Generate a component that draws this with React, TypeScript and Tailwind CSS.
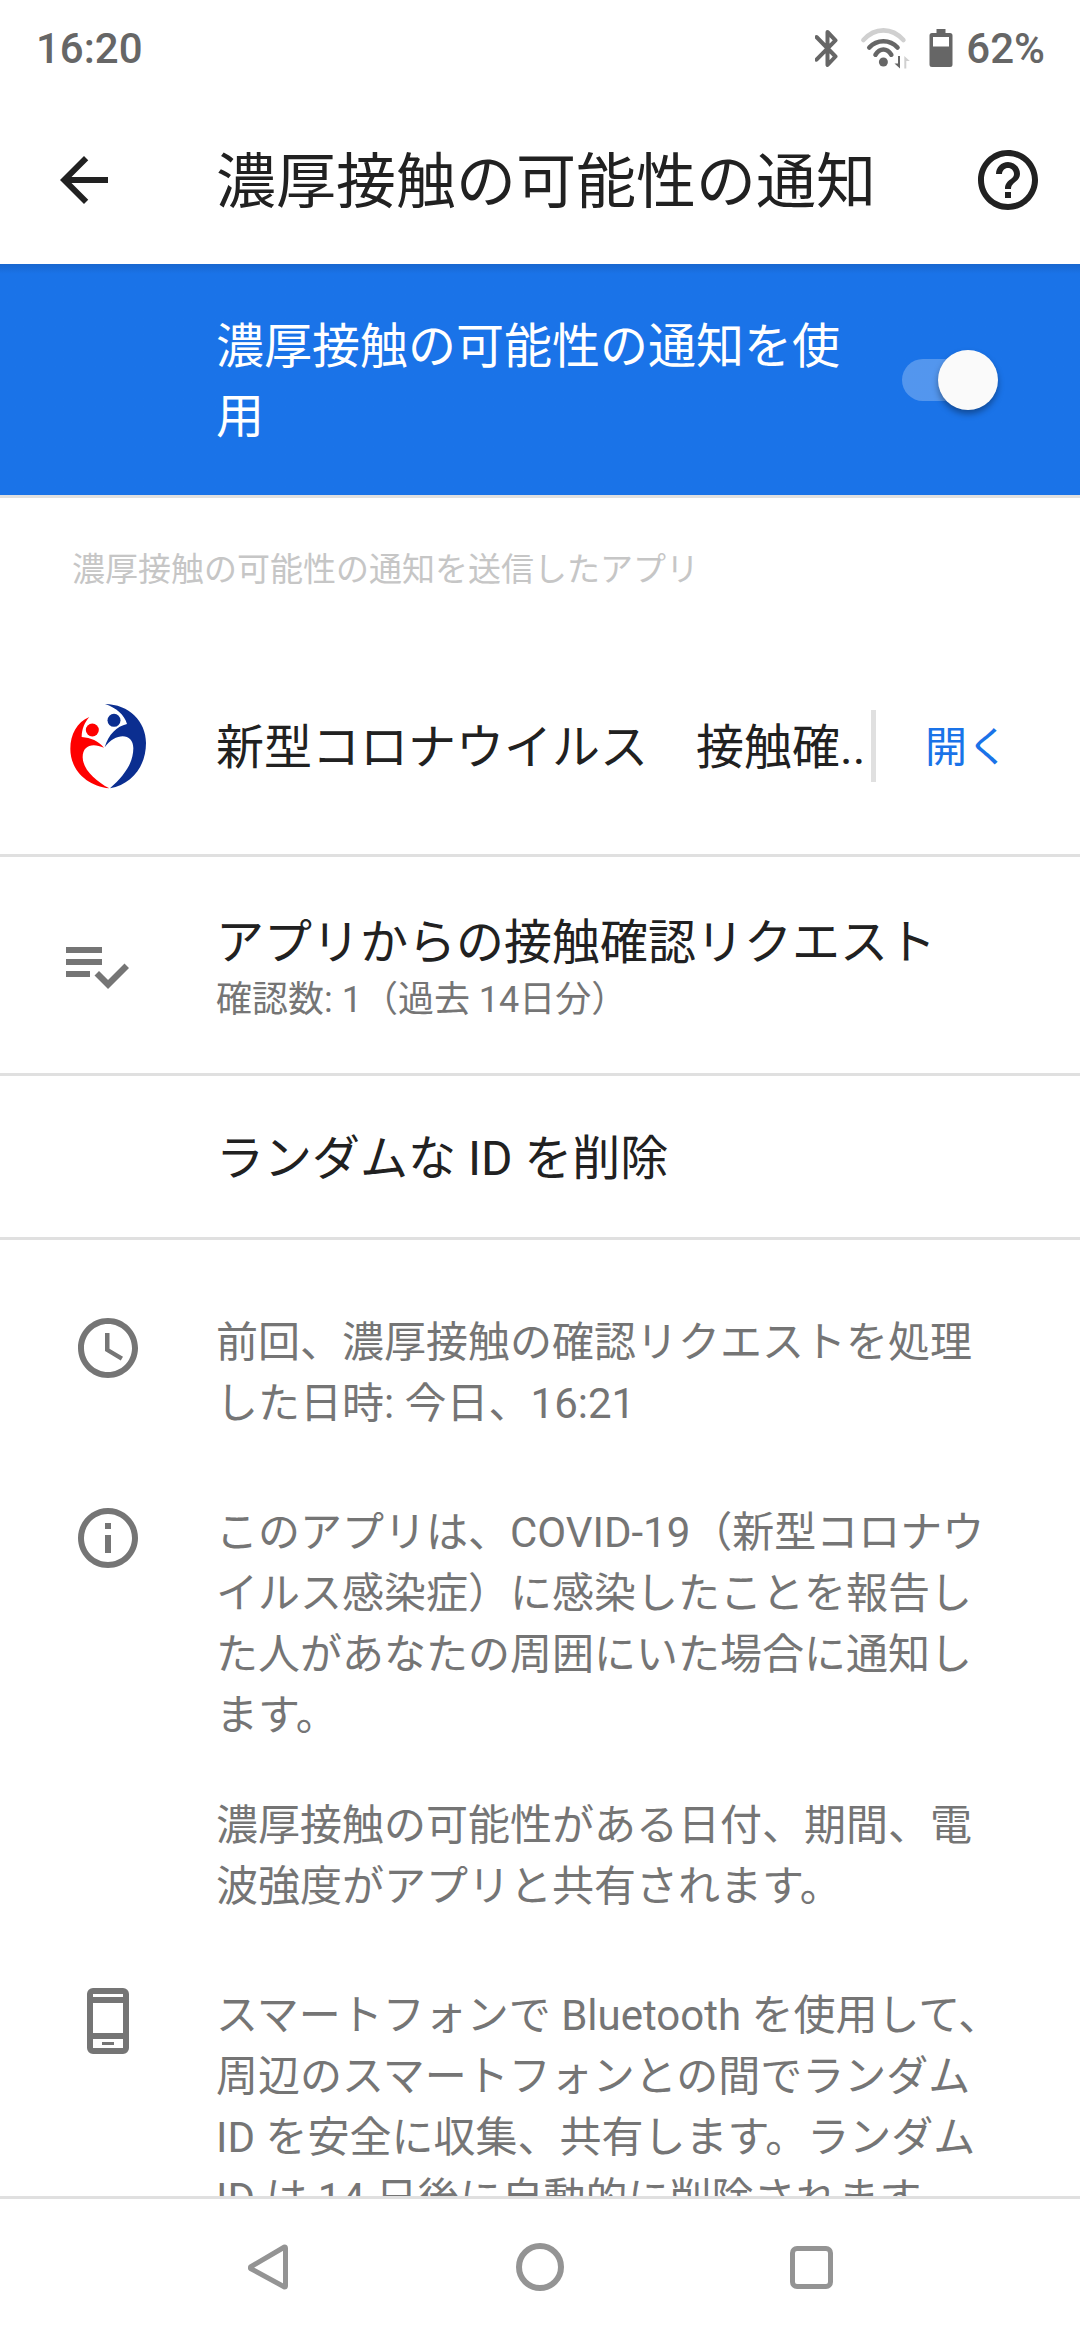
import type { ReactNode } from "react";

function MaterialIcon({ d }: { d: string }) {
  return (
    <svg viewBox="0 0 24 24" fill="currentColor" className="size-[72px] shrink-0">
      <path d={d} />
    </svg>
  );
}

const ICONS = {
  back: "M20 11H7.83l5.59-5.59L12 4l-8 8 8 8 1.41-1.41L7.83 13H20v-2z",
  help: "M11 18h2v-2h-2v2zm1-16C6.48 2 2 6.48 2 12s4.48 10 10 10 10-4.48 10-10S17.52 2 12 2zm0 18c-4.41 0-8-3.59-8-8s3.59-8 8-8 8 3.59 8 8-3.59 8-8 8zm0-14c-2.21 0-4 1.79-4 4h2c0-1.1.9-2 2-2s2 .9 2 2c0 2-3 1.75-3 5h2c0-2.25 3-2.5 3-5 0-2.21-1.79-4-4-4z",
  requests:
    "M14 10H2v2h12v-2zm0-4H2v2h12V6zM2 16h8v-2H2v2zm19.5-4.5L23 13l-6.99 7-4.51-4.5L13 14l3.01 3 5.49-5.5z",
  clock:
    "M11.99 2C6.47 2 2 6.48 2 12s4.47 10 9.99 10C17.52 22 22 17.52 22 12S17.52 2 11.99 2zM12 20c-4.42 0-8-3.58-8-8s3.58-8 8-8 8 3.58 8 8-3.58 8-8 8zm.5-13H11v6l5.25 3.15.75-1.23-4.5-2.67z",
  info: "M11 7h2v2h-2zm0 4h2v6h-2zm1-9C6.48 2 2 6.48 2 12s4.48 10 10 10 10-4.48 10-10S17.52 2 12 2zm0 18c-4.41 0-8-3.59-8-8s3.59-8 8-8 8 3.59 8 8-3.59 8-8 8z",
  phone:
    "M17 1H7a2 2 0 0 0-2 2v18a2 2 0 0 0 2 2h10a2 2 0 0 0 2-2V3a2 2 0 0 0-2-2zM7 3h10v1H7zM7 6h10v10H7zM7 18h10v3H7zM10 19h4v1h-4z",
};

function StatusBar() {
  return (
    <div className="flex h-24 items-center justify-between pt-[2px] pr-[35px] pl-9 text-[42px] font-medium text-[#666666]">
      <span className="leading-[48px]">16:20</span>
      <div className="flex items-center">
        <svg width="26" height="40" viewBox="0 0 26 40" fill="none" stroke="currentColor" strokeWidth="4" strokeLinejoin="round" strokeLinecap="round">
          <path d="M1.500 8 L20.500 27.500 L12.500 36 V3 L20.500 11.300 L1.500 30.700" />
        </svg>
        <svg width="52" height="40" viewBox="0 0 52 40" fill="none" className="ml-5 overflow-visible" strokeLinecap="round">
          <path d="M2.400 11 C14 -1.900 30.800 -1.900 42.400 11" stroke="#d0d0d0" strokeWidth="4.600" />
          <path d="M8.300 18.500 C16 10.100 28.800 10.100 36.500 18.500" stroke="currentColor" strokeWidth="4.600" />
          <path d="M14.500 25.700 C19 18.800 25.800 18.800 30.300 25.700" stroke="currentColor" strokeWidth="4.600" />
          <circle cx="22.400" cy="33" r="4.500" fill="currentColor" />
          <path d="M37 27h2v12.500l-5.500-5h3.500z" fill="currentColor" />
          <path d="M45.300 39.500h-2v-12.500l5.500 5h-3.500z" fill="#d0d0d0" />
        </svg>
        <svg width="24" height="40" viewBox="0 0 24 40" className="mb-[3px] ml-4">
          <path
            fill="currentColor"
            fillRule="evenodd"
            d="M7.500 1h9v4h4.500a2.500 2.500 0 0 1 2.500 2.500v29a2.500 2.500 0 0 1-2.500 2.500h-18a2.500 2.500 0 0 1-2.500-2.500v-29a2.500 2.500 0 0 1 2.500-2.500h4.500zM4 9v9.500h16V9z"
          />
        </svg>
        <span className="ml-[13px] leading-[48px]">62%</span>
      </div>
    </div>
  );
}

function AppLogo() {
  return (
    <svg viewBox="60 114 288 288" className="size-24 shrink-0">
      <path
        fill="#fe0000"
        d="M148 171 C111 186 91 224 91 266 C91 330 140 378 208 385 C168 364 128 328 128 292 C128 255 158 248 192 263 C174 243 153 233 125 231 C125 207 134 187 148 171z"
      />
      <circle cx="157" cy="210" r="19.500" fill="#fe0000" />
      <path
        fill="#0b2e90"
        d="M195 132 C267 133 318 184 318 249 C318 318 276 373 210 385 C252 347 280 310 280 265 C280 217 226 217 194 262 C206 223 230 199 261 192 C253 164 229 144 195 132z"
      />
      <circle cx="222" cy="181" r="19.500" fill="#0b2e90" />
    </svg>
  );
}

function InfoItem({ icon, children }: { icon: string; children: ReactNode }) {
  return (
    <section className="flex items-start pl-[72px]">
      <MaterialIcon d={icon} />
      <div className="ml-[72px] space-y-[49px] text-[42px] leading-[61px] whitespace-nowrap">{children}</div>
    </section>
  );
}

function NavigationBar() {
  return (
    <nav className="flex h-[144px] shrink-0 items-center border-t-[3px] border-[#e0e0e0] bg-white pb-[5px] pl-[132px] text-[#949494]">
      <button className="flex w-[272px] justify-center" aria-label="戻る">
        <svg width="48" height="48" viewBox="0 0 48 48" fill="none" stroke="currentColor" strokeWidth="5" strokeLinejoin="round">
          <path d="M6.500 24 L40.500 4 Q41.500 4 41.500 5.500 V42.500 Q41.500 44 40.500 44 L6.500 25.500z" />
        </svg>
      </button>
      <button className="flex w-[272px] justify-center" aria-label="ホーム">
        <span className="size-12 rounded-full border-[6px] border-current" />
      </button>
      <button className="flex w-[270px] justify-center" aria-label="最近">
        <span className="size-[43px] rounded-[7px] border-[5px] border-current" />
      </button>
    </nav>
  );
}

export default function App() {
  return (
    <div className="flex h-[2340px] w-[1080px] flex-col overflow-hidden bg-white font-[Roboto,'Noto_Sans_CJK_JP',sans-serif] text-[#212121]">
      <StatusBar />
      <header className="flex h-[168px] shrink-0 items-center pr-9 pl-12">
        <MaterialIcon d={ICONS.back} />
        <h1 className="ml-24 flex-1 pt-[5px] text-[60px] leading-[72px] whitespace-nowrap">濃厚接触の可能性の通知</h1>
        <MaterialIcon d={ICONS.help} />
      </header>

      <main className="flex min-h-0 flex-1 flex-col overflow-hidden text-[#757575]">
        <div className="flex h-[234px] shrink-0 items-center border-b-[3px] border-[#e0e0e0] bg-[#1a73e8] bg-linear-to-b from-[#1967cf] to-[#1a73e8] to-[10px] pr-[82px] pl-[216px] text-white">
          <p className="flex-1 pt-1 text-[48px] leading-[70px] whitespace-nowrap">
            濃厚接触の可能性の通知を使
            <br />用
          </p>
          <div className="flex h-[42px] w-24 items-center justify-end rounded-full bg-linear-to-r from-white/25 from-[85px] to-transparent to-[85px]">
            <span className="size-[60px] shrink-0 rounded-full bg-[#fafafa] shadow-[0_4px_6px_rgba(0,0,0,0.35)]" />
          </div>
        </div>

        <h2 className="flex h-[140px] shrink-0 items-center pt-[3px] pl-[72px] text-[33px] text-[#c6c6c6]">
          濃厚接触の可能性の通知を送信したアプリ
        </h2>

        <div className="flex h-[219px] shrink-0 items-center border-b-[3px] border-[#e0e0e0] pl-[60px] whitespace-nowrap">
          <AppLogo />
          <span className="ml-[60px] w-[655px] pt-[3px] text-[48px] leading-[70px] text-[#212121]">新型コロナウイルス　接触確..</span>
          <span className="h-[72px] w-[5px] bg-[#e0e0e0]" />
          <span className="ml-[49px] pt-[2px] text-[42px] text-[#1a73e8]">開く</span>
        </div>

        <div className="flex h-[219px] shrink-0 items-center border-b-[3px] border-[#e0e0e0] pl-[60px]">
          <MaterialIcon d={ICONS.requests} />
          <div className="ml-[84px] pt-[7px]">
            <p className="text-[48px] leading-[62px] text-[#212121]">アプリからの接触確認リクエスト</p>
            <p className="text-[36px] leading-[52px]">確認数: 1（過去 14日分）</p>
          </div>
        </div>

        <div className="flex h-[164px] shrink-0 items-center border-b-[3px] border-[#e0e0e0] pl-[216px]">
          <p className="pt-1 text-[48px] leading-[70px] text-[#212121]">ランダムな ID を削除</p>
        </div>

        <div className="flex shrink-0 flex-col gap-[68px] pt-[72px]">
          <InfoItem icon={ICONS.clock}>
            <p>
              前回、濃厚接触の確認リクエストを処理
              <br />
              した日時: 今日、16:21
            </p>
          </InfoItem>
          <InfoItem icon={ICONS.info}>
            <p>
              このアプリは、COVID-19（新型コロナウ
              <br />
              イルス感染症）に感染したことを報告し
              <br />
              た人があなたの周囲にいた場合に通知し
              <br />
              ます。
            </p>
            <p>
              濃厚接触の可能性がある日付、期間、電
              <br />
              波強度がアプリと共有されます。
            </p>
          </InfoItem>
          <InfoItem icon={ICONS.phone}>
            <p>
              スマートフォンで Bluetooth を使用して、
              <br />
              周辺のスマートフォンとの間でランダム
              <br />
              ID を安全に収集、共有します。ランダム
              <br />
              ID は 14 日後に自動的に削除されます。
            </p>
          </InfoItem>
        </div>
      </main>

      <NavigationBar />
    </div>
  );
}
